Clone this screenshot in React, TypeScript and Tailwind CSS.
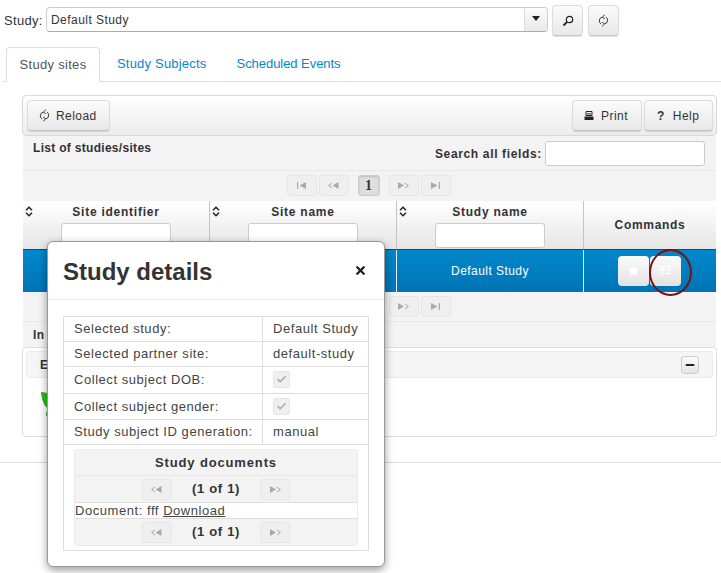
import React from "react";
import { Check, Minus, Star, X } from "lucide-react";

const font = { fontFamily: '"Liberation Sans", Arial, sans-serif' };

const ReloadIcon = ({ color = "#333" }: { color?: string }) => (
  <svg width="11" height="13" viewBox="0 0 11 13" fill="none" stroke={color} strokeWidth="1">
    <path d="M7.8 3A3.7 3.7 0 0 1 7 9.8" />
    <path d="M3.2 10A3.7 3.7 0 0 1 4 3.2" />
    <path d="M6.8 0.8L4.3 3.1L6.8 4.8" />
    <path d="M4.2 12.2L6.7 9.9L4.2 8.2" />
  </svg>
);

const SearchIcon = () => (
  <svg width="12" height="12" viewBox="0 0 12 12" fill="none" stroke="#222">
    <circle cx="7.5" cy="4.5" r="3.2" strokeWidth="1.2" />
    <path d="M5 7L1.5 10.5" strokeWidth="1.8" />
  </svg>
);

const PrintIcon = () => (
  <svg width="10" height="10" viewBox="0 0 10 10">
    <path d="M2 0.5h6v4H2z" fill="none" stroke="#222" />
    <path d="M3 2.5h4M3 3.8h4" stroke="#222" strokeWidth="0.6" />
    <path d="M0.5 5.5h9v3.5h-9z" fill="#222" />
  </svg>
);

const SortIcon = () => (
  <svg width="8" height="11" viewBox="0 0 8 11" fill="none" stroke="#222" strokeWidth="1.5">
    <path d="M1 4.2L4 1.2L7 4.2" />
    <path d="M1 6.8L4 9.8L7 6.8" />
  </svg>
);

const CardIcon = () => (
  <svg width="10" height="10" viewBox="0 0 10 10" fill="none" stroke="#fff" strokeWidth="0.9">
    <rect x="0.5" y="0.5" width="9" height="7" />
    <rect x="1.5" y="2" width="3" height="3" fill="#fff" stroke="none" />
    <path d="M6 2.5h2.5M6 4.5h2.5M2 8.5v1M8 8.5v1" />
  </svg>
);

const Pager = ({ kind }: { kind: "first" | "prev" | "next" | "last" }) => {
  const prevGlyph = (
    <svg width="11" height="7" viewBox="0 0 11 7" fill="#aaa">
      <path d="M0 3.5L4 0.5v1L1.5 3.5L4 5.5v1zM4.5 3.5L10.5 0v7z" />
    </svg>
  );
  const nextGlyph = (
    <svg width="11" height="7" viewBox="0 0 11 7" fill="#aaa">
      <path d="M0 0L6 3.5L0 7zM7 0.5L11 3.5L7 6.5v-1L9.5 3.5L7 1.5z" />
    </svg>
  );
  const firstGlyph = (
    <svg width="9" height="7" viewBox="0 0 9 7" fill="#aaa">
      <path d="M0 0h1.2v7H0zM2.5 3.5L9 0v7z" />
    </svg>
  );
  const lastGlyph = (
    <svg width="9" height="7" viewBox="0 0 9 7" fill="#aaa">
      <path d="M7.8 0H9v7H7.8zM0 0L6.5 3.5L0 7z" />
    </svg>
  );
  const glyph = { first: firstGlyph, prev: prevGlyph, next: nextGlyph, last: lastGlyph }[kind];
  return (
    <span className="flex h-[21px] w-[30px] items-center justify-center rounded-[3px] border border-[#e6e6e6] bg-[#efefef]">
      {glyph}
    </span>
  );
};

const Btn = ({ className, children }: { className: string; children: React.ReactNode }) => (
  <button className={`flex items-center rounded-[4px] border border-[#dcdcdc] border-b-[#c4c4c4] bg-gradient-to-b from-[#fbfbfb] to-[#e8e8e8] text-[12px] tracking-[0.45px] text-[#333] shadow-[0_1px_1px_rgba(0,0,0,0.12)] ${className}`}>
    {children}
  </button>
);

const Disabled = () => (
  <span className="flex h-[17px] w-[17px] items-center justify-center rounded-[2px] border border-[#e6e6e6] bg-[#efefef]">
    <Check size={11} strokeWidth={3.5} className="text-[#aaa]" />
  </span>
);

const HeaderCell = ({ title }: { title: string }) => (
  <div className="relative flex w-[187px] flex-col items-center border-r border-[#c4c4c4] pt-[3px]">
    <span className="absolute left-[2px] top-[5px]">
      <SortIcon />
    </span>
    <span className="text-[12px] font-bold leading-[16px] tracking-[0.75px] text-[#333]">{title}</span>
    <span className="mt-[3px] h-[25px] w-[110px] rounded-[3px] border border-[#ccc] bg-white" />
  </div>
);

const Row = ({ label, children, tall }: { label: string; children: React.ReactNode; tall?: boolean }) => (
  <div className={`flex border-b border-[#ddd] ${tall ? "h-[26.5px]" : "h-[25px]"}`}>
    <div className="flex w-[199px] items-center border-r border-[#ddd] pl-[10px]">{label}</div>
    <div className="flex flex-1 items-center pl-[10px]">{children}</div>
  </div>
);

const DocPager = () => (
  <div className="flex h-[26px] items-center justify-center bg-[#f3f3f3]">
    <Pager kind="prev" />
    <span className="mx-[20px] text-[13px] font-bold tracking-[0.7px] text-[#333]">(1 of 1)</span>
    <Pager kind="next" />
  </div>
);

export default function App() {
  return (
    <div className="relative h-[573px] w-[721px] overflow-hidden bg-white text-[12px] text-[#333]" style={font}>
      {/* study selector */}
      <div className="flex h-[47px] items-start pl-[4px] pt-[5px]">
        <span className="mt-[6px] w-[42px] text-[13px] tracking-[0.3px]">Study:</span>
        <div className="mt-[2px] flex h-[25px] w-[502px] rounded-[4px] border border-[#ccc] border-b-[#aaa] bg-white">
          <span className="flex-1 pl-[4px] pt-[3px] text-[12px] tracking-[0.45px]">Default Study</span>
          <span className="flex w-[23px] items-center justify-center rounded-r-[4px] border-l border-[#ddd] bg-gradient-to-b from-[#fcfcfc] to-[#e8e8e8]">
            <span className="mb-[2px] border-x-[4px] border-t-[5px] border-x-transparent border-t-[#222]" />
          </span>
        </div>
        <Btn className="ml-[4px] h-[31px] w-[31px] justify-center">
          <SearchIcon />
        </Btn>
        <Btn className="ml-[5px] h-[31px] w-[31px] justify-center">
          <ReloadIcon />
        </Btn>
      </div>

      {/* tabs */}
      <div className="ml-[3px] flex h-[35px] items-stretch border-b border-[#ddd] pl-[3px] text-[13px]">
        <div className="mb-[-1px] flex w-[94px] items-center justify-center rounded-t-[4px] border border-b-0 border-[#ddd] bg-white tracking-[0.3px] text-[#555]">
          Study sites
        </div>
        <div className="ml-[17px] flex items-center tracking-[0.2px] text-[#0088cc]">Study Subjects</div>
        <div className="ml-[30px] flex items-center tracking-[-0.05px] text-[#0088cc]">Scheduled Events</div>
      </div>

      {/* main panel */}
      <div className="ml-[22px] mt-[13px] w-[695px]">
        <div className="flex h-[41px] items-center justify-between rounded-[4px] border border-[#d8d8d8] bg-gradient-to-b from-white to-[#ececec] pl-[4px] pr-[3px]">
          <Btn className="h-[31px] w-[83px] pl-[11px]">
            <ReloadIcon />
            <span className="ml-[6px]">Reload</span>
          </Btn>
          <div className="flex gap-[2px]">
            <Btn className="h-[31px] w-[70px] pl-[11px]">
              <PrintIcon />
              <span className="ml-[7px]">Print</span>
            </Btn>
            <Btn className="h-[31px] w-[69px] pl-[12px]">
              <span className="text-[12px] font-bold">?</span>
              <span className="ml-[8px]">Help</span>
            </Btn>
          </div>
        </div>

        <div className="ml-[1px] w-[693px] bg-[#f3f3f3]">
          <div className="flex h-[35px] justify-between border-b border-[#e8e8e8] pl-[10px] pr-[11px]">
            <span className="pt-[5px] text-[12px] font-bold leading-[14px] tracking-[0.3px]">List of studies/sites</span>
            <div className="flex items-start pt-[5px]">
              <span className="mr-[3px] mt-[6px] text-[12px] font-bold leading-[14px] tracking-[0.65px]">Search all fields:</span>
              <span className="h-[25px] w-[160px] rounded-[3px] border border-[#ccc] bg-white" />
            </div>
          </div>
          <div className="flex h-[30px] items-center justify-center gap-[2px] pb-[1px] pr-[2px]">
            <Pager kind="first" />
            <Pager kind="prev" />
            <span className="mx-[7px] flex h-[21px] w-[22px] items-center justify-center rounded-[3px] border border-[#ccc] bg-[#dedede] font-['Liberation_Serif'] text-[14px] font-bold shadow-[inset_0_1px_2px_rgba(0,0,0,0.15)]">
              1
            </span>
            <Pager kind="next" />
            <Pager kind="last" />
          </div>

          {/* table */}
          <div className="flex h-[48px] bg-gradient-to-b from-white to-[#e6e6e6]">
            <HeaderCell title="Site identifier" />
            <HeaderCell title="Site name" />
            <HeaderCell title="Study name" />
            <div className="flex flex-1 items-center justify-center text-[12px] font-bold tracking-[0.7px]">Commands</div>
          </div>
          <div className="flex h-[43px] border-t border-[#0a4f7a] bg-gradient-to-b from-[#0088cc] to-[#0074b5] text-white">
            <div className="w-[187px] border-r border-[#e8f0f6]" />
            <div className="w-[187px] border-r border-[#e8f0f6]" />
            <div className="flex w-[187px] items-center justify-center border-r border-[#e8f0f6] text-[12px] tracking-[0.45px]">
              Default Study
            </div>
            <div className="flex flex-1 items-center justify-center pb-[1px] pr-[2px]">
              <span className="flex h-[30px] w-[31px] items-center justify-center rounded-[4px] bg-gradient-to-b from-[#fbfbfb] to-[#e2e2e2]">
                <Star size={11} fill="#fff" stroke="#fff" />
              </span>
              <span className="ml-[1px] flex h-[30px] w-[31px] items-center justify-center rounded-[4px] bg-gradient-to-b from-[#fbfbfb] to-[#e2e2e2]">
                <CardIcon />
              </span>
            </div>
          </div>
          <div className="flex h-[30px] items-center justify-center gap-[2px] border-b border-[#e8e8e8] pr-[2px]">
            <Pager kind="first" />
            <Pager kind="prev" />
            <span className="mx-[7px] flex h-[21px] w-[22px] items-center justify-center text-[13px] font-bold">1</span>
            <Pager kind="next" />
            <Pager kind="last" />
          </div>
          <div className="flex h-[25px] items-center pl-[10px] text-[12px] font-bold tracking-[0.3px]">
            In order to change your active study.
          </div>
        </div>

        {/* lower panel */}
        <div className="h-[90px] w-[695px] rounded-[4px] border border-[#ddd] bg-white p-[3px]">
          <div className="flex h-[27px] items-center justify-between rounded-[3px] border border-[#eaeaea] bg-[#f5f5f5] pl-[13px] pr-[13px]">
            <span className="text-[12px] font-bold">Edit</span>
            <span className="flex h-[18px] w-[18px] items-center justify-center rounded-[3px] border border-[#ccc] bg-gradient-to-b from-[#fcfcfc] to-[#e4e4e4]">
              <Minus size={12} strokeWidth={4} className="text-[#222]" />
            </span>
          </div>
          <svg className="ml-[15px] mt-[14px]" width="24" height="26" viewBox="0 0 24 26">
            <path d="M0.5 0.5C3 1 6 1.5 8 1.5L9 15C7 16 5 15 4 13C2 9 1 5 0.5 0.5z" fill="#22c414" stroke="#3f9a35" />
            <circle cx="8" cy="22" r="3" fill="#3aa52c" />
          </svg>
        </div>
      </div>
      <div className="mt-[25px] h-px w-full bg-[#ddd]" />

      {/* red highlight circle */}
      <span className="absolute left-[649px] top-[249px] h-[47px] w-[43px] rounded-[50%] border-2 border-[#7d1010]" />

      {/* dialog */}
      <div className="absolute left-[47px] top-[241px] h-[326px] w-[338px] rounded-[6px] border border-[#999] bg-white shadow-[0_3px_8px_rgba(0,0,0,0.4)]">
        <div className="flex h-[58px] items-center justify-between border-b border-[#eee] pl-[15px] pr-[17px] pt-[3px]">
          <span className="text-[24px] font-bold">Study details</span>
          <X size={13} strokeWidth={4.5} className="mb-[3px] text-[#222]" />
        </div>
        <div className="mx-[15px] mt-[16px] h-[235px] border border-[#ddd] text-[13px] tracking-[0.55px] text-[#444]">
          <Row label="Selected study:">Default Study</Row>
          <Row label="Selected partner site:">default-study</Row>
          <Row label="Collect subject DOB:" tall>
            <Disabled />
          </Row>
          <Row label="Collect subject gender:" tall>
            <Disabled />
          </Row>
          <Row label="Study subject ID generation:">manual</Row>
          <div className="mx-[10px] mt-[4px] overflow-hidden rounded-[3px] border border-[#eaeaea]">
            <div className="flex h-[26px] items-center justify-center border-b border-[#e8e8e8] bg-[#f3f3f3] font-bold tracking-[0.85px] text-[#333]">
              Study documents
            </div>
            <DocPager />
            <div className="h-[17px] whitespace-nowrap border-y border-[#ddd] bg-white leading-[15px]">
              Document: fff <span className="underline">Download</span>
            </div>
            <DocPager />
          </div>
        </div>
      </div>
    </div>
  );
}
